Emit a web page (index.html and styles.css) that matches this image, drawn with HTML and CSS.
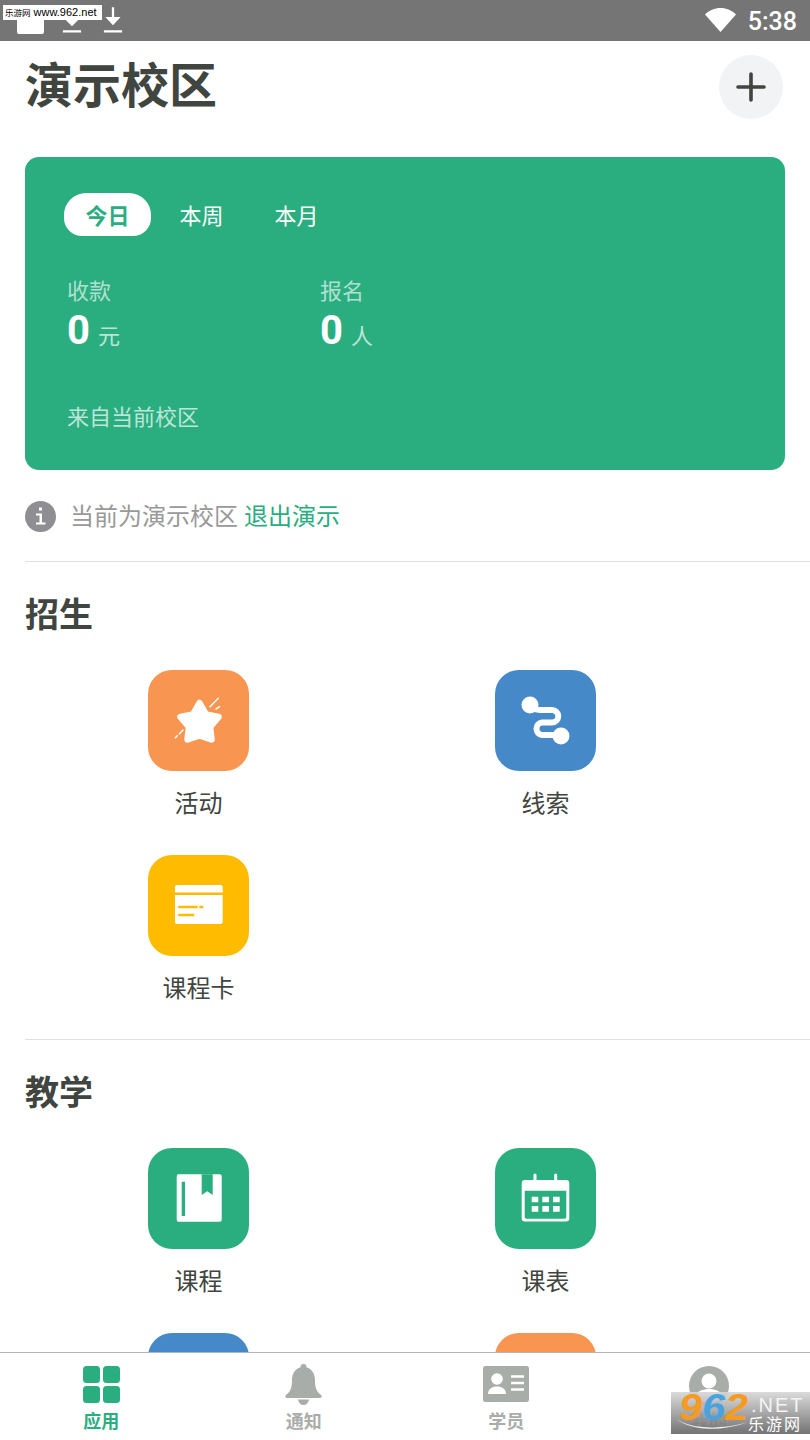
FILE: index.html
```html
<!DOCTYPE html>
<html lang="zh-CN">
<head>
  <meta charset="UTF-8">
  <title>演示校区</title>
  <link rel="stylesheet" href="styles.css">
</head>
<body>
  <div class="phone">
    <div class="statusBar">
      <div class="statusLeft">
        <span class="notifyBox"></span>
        <svg class="dlIcon" width="20" height="28" viewBox="0 0 22 28"><path d="M11 6v11M5 13l6 6 6-6z M1 26.500h20" fill="#fff" stroke="#fff" stroke-width="2.500"/></svg>
        <svg class="dlIcon" width="20" height="28" viewBox="0 0 22 28"><path d="M11 0v15M5.500 12l5.500 6 5.500-6z M1 26.500h20" fill="#fff" stroke="#fff" stroke-width="2.500"/></svg>
      </div>
      <div class="statusRight">
        <svg class="wifi" width="31" height="24" viewBox="0 0 31 24"><path d="M0 6.500C4 2.500 9.500 0 15.500 0S27 2.500 31 6.500L15.500 24z" fill="#fff"/></svg>
        <span class="clock">5:38</span>
      </div>
    </div>

    <div class="content">
      <div class="header">
        <h1>演示校区</h1>
        <div class="addBtn">
          <svg width="30" height="30" viewBox="0 0 30 30"><path d="M15 2v26M2 15h26" stroke="#404540" stroke-width="3.600" stroke-linecap="round"/></svg>
        </div>
      </div>

      <div class="summaryCard">
        <div class="tabs">
          <span class="tab active">今日</span>
          <span class="tab">本周</span>
          <span class="tab">本月</span>
        </div>
        <div class="stats">
          <div class="stat">
            <div class="statLabel">收款</div>
            <div class="statValue"><b>0</b><span>元</span></div>
          </div>
          <div class="stat">
            <div class="statLabel">报名</div>
            <div class="statValue"><b>0</b><span>人</span></div>
          </div>
        </div>
        <div class="source">来自当前校区</div>
      </div>

      <div class="notice">
        <svg width="31" height="31" viewBox="0 0 31 31"><circle cx="15.500" cy="15.500" r="15.500" fill="#8e8e93"/><path d="M14 6.500h3v3h-3zM11 12.500h6v9h3.500v2h-9.500v-2h3.500v-7H11z" fill="#fff"/></svg>
        <span>当前为演示校区</span>
        <a class="exitLink">退出演示</a>
      </div>

      <section class="section">
        <h2>招生</h2>
        <div class="grid">
          <div class="app">
            <div class="appIcon orange">
              <svg width="101" height="101" viewBox="0 0 101 101"><path d="M51.500 33L58 44.500 70.500 47 62 57 63.500 69.500 51.500 65.500 39.500 69.500 41 57 32.500 47 45 44.500z" fill="#fff" stroke="#fff" stroke-width="6.500" stroke-linejoin="round"/><path d="M62 36.700l8.300-8.400M68 39l3.500-2.300M31.300 64l3.700-4M27.300 67.700l2-2" stroke="#fff" stroke-width="1.500" stroke-linecap="round"/></svg>
            </div>
            <div class="appName">活动</div>
          </div>
          <div class="app">
            <div class="appIcon blue">
              <svg width="101" height="101" viewBox="0 0 101 101"><circle cx="35" cy="35" r="8.500" fill="#fff"/><circle cx="66" cy="66" r="8.500" fill="#fff"/><path d="M35 36c3 3 6 4 10 4h12a6 6 0 0 1 0 12.500H47a6.300 6.300 0 0 0 0 12.500h19" fill="none" stroke="#fff" stroke-width="6"/></svg>
            </div>
            <div class="appName">线索</div>
          </div>
          <div class="app">
            <div class="appIcon yellow">
              <svg width="101" height="101" viewBox="0 0 101 101"><path d="M29 30h43.700a2 2 0 0 1 2 2v5.500H27V32a2 2 0 0 1 2-2zM27 40h47.700v27a2 2 0 0 1-2 2H29a2 2 0 0 1-2-2z" fill="#fff"/><path d="M30.300 52h19.400M51.300 52h4M30.300 60h16" stroke="#ffbb00" stroke-width="2.600"/></svg>
            </div>
            <div class="appName">课程卡</div>
          </div>
        </div>
      </section>

      <section class="section">
        <h2>教学</h2>
        <div class="grid">
          <div class="app">
            <div class="appIcon green">
              <svg width="101" height="101" viewBox="0 0 101 101"><path d="M31 26.300h40.700a2 2 0 0 1 2 2v43.400a2 2 0 0 1-2 2H31a2 2 0 0 1-2.300-2V28.300a2 2 0 0 1 2.300-2z" fill="#fff"/><path d="M33.700 33.700h3.300V68h-3.300zM53.700 26.300h11V47l-5.500-3.700-5.500 3.700z" fill="#2aae7f"/></svg>
            </div>
            <div class="appName">课程</div>
          </div>
          <div class="app">
            <div class="appIcon green">
              <svg width="101" height="101" viewBox="0 0 101 101"><path d="M40 27v6M60.700 27v6" stroke="#fff" stroke-width="3" stroke-linecap="round"/><path d="M30 32h41a3.300 3.300 0 0 1 3.300 3.300v35a3.300 3.300 0 0 1-3.300 3.300H30a3.300 3.300 0 0 1-3.300-3.300v-35A3.300 3.300 0 0 1 30 32zM29.700 42.700V69a1.700 1.700 0 0 0 1.700 1.700h38.200a1.700 1.700 0 0 0 1.700-1.700V42.700z" fill="#fff" fill-rule="evenodd"/><path d="M36.700 48.700h6.600v5.600h-6.600zM47.300 48.700H54v5.600h-6.700zM58 48.700h6.700v5.600H58zM36.700 58h6.600v5.700h-6.600zM47.300 58H54v5.700h-6.700zM58 58h6.700v5.700H58z" fill="#fff"/></svg>
            </div>
            <div class="appName">课表</div>
          </div>
          <div class="app">
            <div class="appIcon blue"></div>
          </div>
          <div class="app">
            <div class="appIcon orange"></div>
          </div>
        </div>
      </section>
    </div>

    <div class="tabBar">
      <div class="barItem current">
        <svg width="37" height="38" viewBox="0 0 37 38"><rect x="0" y="0" width="17" height="17" rx="3.500"/><rect x="20" y="0" width="17" height="17" rx="3.500"/><rect x="0" y="20" width="17" height="17" rx="3.500"/><rect x="20" y="20" width="17" height="17" rx="3.500"/></svg>
        <span>应用</span>
      </div>
      <div class="barItem">
        <svg width="37" height="42" viewBox="0 0 37 42"><circle cx="18.500" cy="3" r="3"/><path d="M18.500 3c7.500 0 11.500 6 11.500 13 0 7 1 11 5.500 14.500 2 1.500 1.500 3.500-1 3.500H2.500c-2.500 0-3-2-1-3.500C6 27 7 23 7 16 7 9 11 3 18.500 3z"/><path d="M13 35.500h11c-.5 3.500-2.800 5.500-5.500 5.500S13.500 39 13 35.500z"/></svg>
        <span>通知</span>
      </div>
      <div class="barItem">
        <svg width="46" height="38" viewBox="0 0 46 38"><path d="M2.500 0h41A2.500 2.500 0 0 1 46 2.500v31a2.500 2.500 0 0 1-2.500 2.500h-41A2.500 2.500 0 0 1 0 33.500v-31A2.500 2.500 0 0 1 2.500 0z"/><circle cx="14" cy="13" r="5.800" fill="#fff"/><path d="M5 28c0-5 4-7.500 9-7.500s9 2.500 9 7.500z" fill="#fff"/><path d="M28 10.500h13M28 17h13M28 23.500h13" stroke="#fff" stroke-width="2.400"/></svg>
        <span>学员</span>
      </div>
      <div class="barItem">
        <svg width="40" height="38" viewBox="0 0 40 38"><circle cx="20" cy="20" r="20"/><circle cx="20" cy="15" r="7.500" fill="#fff"/><path d="M6 31c2-6 8-8 14-8s12 2 14 8a19 19 0 0 1-28 0z" fill="#fff"/></svg>
        <span>我的</span>
      </div>
    </div>

    <div class="markTop"><span class="markTopCn">乐游网</span> www.962.net</div>
    <div class="markBottom">
      <svg class="swoosh" width="74" height="14" viewBox="0 0 74 14"><path d="M0 2c14 9 42 12 72 3-26 10-56 9-72-3z" fill="#eee"/></svg>
      <span class="markNum"><i class="o">9</i><i class="b">6</i><i class="o">2</i></span>
      <span class="markNet">.NET</span>
      <span class="markCn">乐游网</span>
    </div>
  </div>
</body>
</html>
```

FILE: styles.css
```css
* {
  box-sizing: border-box;
}

html, body {
  margin: 0;
  padding: 0;
  background: #fff;
}

body {
  font-family: "Noto Sans CJK SC", "Noto Sans", sans-serif;
  color: #404540;
}

.phone {
  position: relative;
  width: 810px;
  height: 1440px;
  display: flex;
  flex-direction: column;
  overflow: hidden;
}

/* status bar */
.statusBar {
  flex: none;
  height: 41px;
  background: #757575;
  display: flex;
  justify-content: space-between;
  padding: 0 13px 0 17px;
}

.statusLeft {
  display: flex;
  align-items: flex-end;
  gap: 18px;
  padding-bottom: 7px;
}

.notifyBox {
  width: 27px;
  height: 26px;
  background: #fff;
  border-radius: 2px;
}

.dlIcon {
  display: block;
}

.dlIcon + .dlIcon {
  margin-left: 3px;
}

.statusRight {
  display: flex;
  align-items: flex-start;
  gap: 12px;
}

.wifi {
  margin-top: 8px;
}

.clock {
  font-family: Roboto, sans-serif;
  font-weight: 500;
  font-size: 25px;
  line-height: 30px;
  margin-top: 7px;
  color: #fff;
}

/* main */
.content {
  flex: 1;
  min-height: 0;
  overflow: hidden;
  padding-left: 25px;
}

.header {
  display: flex;
  justify-content: space-between;
  align-items: center;
  height: 92px;
  padding-right: 27px;
  margin-bottom: 24px;
}

.header h1 {
  margin: -10px 0 0;
  font-size: 48px;
  line-height: 64px;
  font-weight: 700;
}

.addBtn {
  width: 64px;
  height: 64px;
  border-radius: 50%;
  background: #f2f3f5;
  display: flex;
  align-items: center;
  justify-content: center;
}

.summaryCard {
  width: 760px;
  height: 313px;
  background: #2aae7f;
  border-radius: 14px;
  padding: 36px 42px 0 39px;
  color: #fff;
}

.tabs {
  display: flex;
  gap: 8px;
}

.tab {
  width: 87px;
  height: 43px;
  border-radius: 22px;
  text-align: center;
  font-size: 22px;
  line-height: 43px;
}

.tab.active {
  background: #fff;
  color: #2aae7f;
  font-weight: 700;
  margin-right: -1px;
  border-radius: 22px 22px 18px 18px;
}

.stats {
  display: flex;
  margin-top: 38px;
  padding-left: 3px;
}

.stat {
  width: 253px;
}

.statLabel {
  font-size: 22px;
  line-height: 30px;
  color: rgba(255, 255, 255, 0.65);
}

.statValue {
  display: flex;
  align-items: baseline;
  height: 48px;
  margin-top: 3px;
}

.statValue b {
  font-family: Roboto, sans-serif;
  font-size: 40px;
  line-height: 48px;
  font-weight: 700;
}

.statValue span {
  margin-left: 8px;
  font-size: 22px;
  color: rgba(255, 255, 255, 0.7);
}

.source {
  margin-top: 45px;
  padding-left: 3px;
  font-size: 22px;
  line-height: 30px;
  color: rgba(255, 255, 255, 0.7);
}

.notice {
  display: flex;
  align-items: center;
  height: 91px;
  font-size: 24px;
  color: #999;
}

.notice svg {
  margin: 2px 14px 0 0;
}

.notice span, .notice a {
  margin-top: -2px;
}

.exitLink {
  margin-left: 6px;
  color: #2aae7f;
}

.section {
  border-top: 1px solid #e0e0e0;
  padding-top: 26px;
}

.section + .section {
  margin-top: -1px;
}

.section h2 {
  margin: 0;
  font-size: 34px;
  line-height: 50px;
  font-weight: 700;
  color: #404540;
}

.grid {
  display: grid;
  grid-template-columns: 347px 347px;
  margin-top: 32px;
}

.app {
  height: 185px;
  display: flex;
  flex-direction: column;
  align-items: center;
}

.appIcon {
  width: 101px;
  height: 101px;
  border-radius: 24px;
  flex: none;
}

.appIcon svg {
  display: block;
}

.orange { background: #f89550; }
.blue { background: #4589c9; }
.yellow { background: #ffbb00; }
.green { background: #2aae7f; }

.appName {
  margin-top: 14px;
  font-size: 24px;
  line-height: 34px;
  color: #404540;
}

/* bottom tabs */
.tabBar {
  flex: none;
  height: 88px;
  background: #fff;
  border-top: 1px solid #b4b4b4;
  display: grid;
  grid-template-columns: repeat(4, 202.500px);
}

.barItem {
  display: flex;
  flex-direction: column;
  align-items: center;
  padding-top: 11px;
  color: #a9adaa;
  fill: #a9adaa;
}

.barItem svg {
  display: block;
  height: 42px;
  flex: none;
}

.barItem span {
  font-size: 18px;
  line-height: 24px;
  font-weight: 700;
  margin-top: 2px;
}

.barItem.current {
  color: #2aae7f;
  fill: #2aae7f;
}

/* watermarks over the screenshot */
.markTop {
  position: absolute;
  left: 3px;
  top: 5px;
  width: 99px;
  height: 15px;
  background: #fff;
  color: #000;
  font-family: "Liberation Sans", sans-serif;
  font-size: 11px;
  line-height: 15px;
  padding-left: 2px;
  white-space: nowrap;
}

.markTopCn {
  font-family: "Noto Sans CJK SC", sans-serif;
  font-size: 8.500px;
}

.markBottom {
  position: absolute;
  left: 671px;
  top: 1392px;
  width: 139px;
  height: 42px;
  background: linear-gradient(rgba(215, 215, 215, 0.9), rgba(100, 100, 100, 0.9));
}

.markBottom span {
  position: absolute;
  white-space: nowrap;
}

.swoosh {
  position: absolute;
  left: 5px;
  top: 25px;
}

.markNum {
  left: 8px;
  top: 0;
  font-family: "Liberation Sans", sans-serif;
  font-weight: 700;
  font-size: 36px;
  line-height: 32px;
  transform: scaleX(1.15);
  transform-origin: left top;
}

.markNum i {
  font-style: italic;
}

.markNum .o { color: #f59a23; }
.markNum .b { color: #4aa3e0; }

.markNet {
  left: 80px;
  top: 3px;
  font-family: "Liberation Sans", sans-serif;
  font-size: 20px;
  line-height: 20px;
  letter-spacing: 2px;
  color: #f4f4f4;
}

.markCn {
  left: 77px;
  top: 22px;
  font-size: 16px;
  line-height: 18px;
  letter-spacing: 2px;
  color: #fff;
}
```
